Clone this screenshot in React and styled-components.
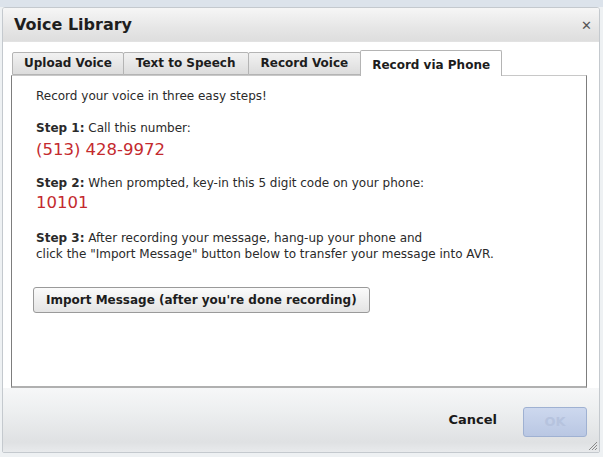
import styled, { createGlobalStyle } from "styled-components"

const Global = createGlobalStyle`
    html, body {
        margin: 0;
        padding: 0;
        background: #e4e9ee;
    }
    body {
        font-family: "DejaVu Sans", Verdana, sans-serif;
        color: #222;
    }
`

const Page = styled.div`
    width: 603px;
    height: 457px;
    padding: 7px 3px 0 2px;
    box-sizing: border-box;
    background: linear-gradient(#dce3eb 0, #dce3eb 7px, #eef1f3 7px);
`

const Dialog = styled.div`
    position: relative;
    height: 446px;
    display: flex;
    flex-direction: column;
    border: 1px solid #c4c9ce;
    border-radius: 3px 3px 2px 2px;
    background: #fff;
    box-sizing: border-box;
    overflow: hidden;
`

const TitleBar = styled.div`
    height: 34px;
    display: flex;
    align-items: center;
    justify-content: space-between;
    padding: 0 7px 0 11px;
    background: linear-gradient(#f6f6f6, #e6e6e6 60%, #dedede);
    border-bottom: 1px solid #e2e2e2;

    h1 {
        margin: 0;
        font-size: 16px;
        font-weight: 700;
        color: #1e1e1e;
    }
`

const Close = styled.span`
    font-size: 13px;
    color: #555;
    margin-top: 2px;
`

const Body = styled.div`
    flex: 1;
    display: flex;
    flex-direction: column;
    padding: 8px 12px 0 8px;
    background: #fff;
`

const Tabs = styled.div`
    display: flex;
    align-items: flex-end;
    height: 25px;
    padding-left: 1px;
`

const Tab = styled.div`
    height: ${p => (p.$active ? "26px" : "23px")};
    padding: 0 ${p => p.$pad}px;
    display: flex;
    align-items: center;
    justify-content: center;
    box-sizing: border-box;
    font-size: 12px;
    font-weight: 700;
    color: #1d1d1d;
    border: 1px solid #b4b4b4;
    border-bottom: ${p => (p.$active ? "none" : "1px solid #b4b4b4")};
    margin-right: ${p => (p.$active ? "0" : "-1px")};
    margin-bottom: ${p => (p.$active ? "-1px" : "0")};
    border-radius: 2px 2px 0 0;
    background: ${p => (p.$active ? "#fff" : "linear-gradient(#f2f2f2, #dcdcdc)")};
    position: relative;
    z-index: ${p => (p.$active ? 2 : 1)};
    padding-top: ${p => (p.$active ? "3px" : "0")};
`

const Panel = styled.div`
    height: 313px;
    box-sizing: border-box;
    border-left: 1px solid #7d7d7d;
    border-right: 1px solid #7d7d7d;
    border-top: 1px solid #c8c8c8;
    border-bottom: 2px solid #b0b0b0;
    padding: 12px 24px;
    font-size: 12px;
    line-height: 16px;
    color: #2a2a2a;
`

const Para = styled.p`
    margin: 0 0 ${p => p.$gap || 0}px;
`

const Red = styled.div`
    color: #c42a2e;
    font-size: 16.5px;
    line-height: 22px;
    margin: ${p => p.$top || 0}px 0 ${p => p.$gap || 0}px;
`

const ImportButton = styled.button`
    margin-top: 25px;
    height: 26px;
    padding: 0 12px;
    font-family: "DejaVu Sans", Verdana, sans-serif;
    font-size: 12px;
    font-weight: 700;
    color: #1d1d1d;
    border: 1px solid #9a9a9a;
    border-radius: 3px;
    background: linear-gradient(#fbfbfb, #e4e4e4);
    margin-left: -3px;
`

const Footer = styled.div`
    height: 64px;
    display: flex;
    align-items: center;
    justify-content: flex-end;
    gap: 26px;
    padding: 0 12px 2px;
    background: linear-gradient(#f6f7f8, #eceeef 40%, #dfe1e3 85%, #e8eaec);
`

const CancelButton = styled.span`
    font-size: 13px;
    font-weight: 700;
    color: #1a1a1a;
    margin-top: 2px;
`

const OkButton = styled.div`
    width: 62px;
    height: 28px;
    margin-top: 6px;
    display: flex;
    align-items: center;
    justify-content: center;
    font-size: 13px;
    font-weight: 700;
    color: #b6c3de;
    border: 1px solid #9fb1d2;
    border-radius: 3px;
    background: linear-gradient(#cdd8ee, #b9c7e3);
`

const Grip = styled.svg`
    position: absolute;
    right: 1px;
    bottom: 1px;
`

export default function App() {
    return (
        <>
            <Global />
            <Page>
                <Dialog>
                    <TitleBar>
                        <h1>Voice Library</h1>
                        <Close>✕</Close>
                    </TitleBar>
                    <Body>
                        <Tabs>
                            <Tab $pad={11}>Upload Voice</Tab>
                            <Tab $pad={12}>Text to Speech</Tab>
                            <Tab $pad={12}>Record Voice</Tab>
                            <Tab $pad={11} $active>Record via Phone</Tab>
                        </Tabs>
                        <Panel>
                            <Para $gap={16}>Record your voice in three easy steps!</Para>
                            <Para><b>Step 1:</b> Call this number:</Para>
                            <Red $top={3} $gap={14}>(513) 428-9972</Red>
                            <Para><b>Step 2:</b> When prompted, key-in this 5 digit code on your phone:</Para>
                            <Red $top={1} $gap={16}>10101</Red>
                            <Para><b>Step 3:</b> After recording your message, hang-up your phone and</Para>
                            <Para>click the "Import Message" button below to transfer your message into AVR.</Para>
                            <ImportButton>Import Message (after you're done recording)</ImportButton>
                        </Panel>
                    </Body>
                    <Footer>
                        <CancelButton>Cancel</CancelButton>
                        <OkButton>OK</OkButton>
                    </Footer>
                    <Grip width="11" height="11" viewBox="0 0 11 11">
                        <path d="M10 2 L2 10 M10 5 L5 10 M10 8 L8 10" stroke="#8a8a8a" strokeWidth="1" />
                    </Grip>
                </Dialog>
            </Page>
        </>
    )
}
